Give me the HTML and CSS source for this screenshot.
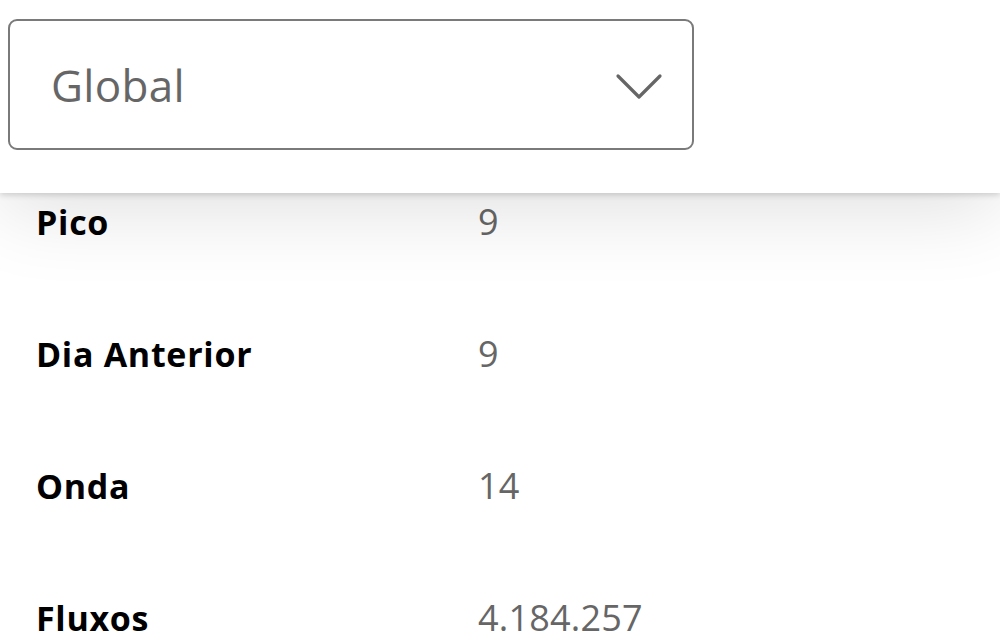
FILE: index.html
```html
<!DOCTYPE html>
<html lang="pt">
<head>
<meta charset="utf-8">
<title>Global</title>
<link rel="stylesheet" href="styles.css">
</head>
<body>
<header class="header">
  <div class="select">
    <span class="select-value">Global</span>
    <svg class="chevron" width="48" height="30" viewBox="0 0 48 30" aria-hidden="true">
      <polyline points="3,4 24,25 45,4" fill="none" stroke="#666" stroke-width="3.2" stroke-linecap="round" stroke-linejoin="round"/>
    </svg>
  </div>
</header>
<main class="stats">
  <div class="row"><span class="label">Pico</span><span class="value">9</span></div>
  <div class="row"><span class="label">Dia Anterior</span><span class="value">9</span></div>
  <div class="row"><span class="label">Onda</span><span class="value">14</span></div>
  <div class="row"><span class="label">Fluxos</span><span class="value">4.184.257</span></div>
</main>
</body>
</html>
```
FILE: styles.css
```css
html, body {
  margin: 0;
  padding: 0;
  background: #fff;
  overflow: hidden;
}

body {
  font-family: "Open Sans", "Liberation Sans", sans-serif;
}

.header {
  position: relative;
  z-index: 1;
  height: 193px;
  box-sizing: border-box;
  padding: 19px 0 0 8px;
  background: #fff;
  box-shadow: 0 2px 6px rgba(0, 0, 0, 0.16), 0 18px 80px rgba(0, 0, 0, 0.12);
}

.select {
  width: 686px;
  height: 131px;
  box-sizing: border-box;
  border: 2px solid #7a7a7a;
  border-radius: 9px;
  display: flex;
  align-items: center;
  justify-content: space-between;
  padding: 0 29px 0 41px;
}

.select-value {
  font-size: 44px;
  color: #666;
  line-height: 1;
  letter-spacing: 0.3px;
}

.chevron {
  display: block;
  margin-top: 4px;
}

.stats {
  display: flex;
  flex-direction: column;
  gap: 92px;
  padding: 9px 0 0 36px;
}

.row {
  display: grid;
  grid-template-columns: 442px auto;
  align-items: baseline;
  line-height: 40px;
}

.label {
  font-size: 34px;
  font-weight: 700;
  color: #000;
  letter-spacing: 0.7px;
}

.value {
  font-size: 36px;
  color: #666;
  letter-spacing: 0.2px;
}
```
